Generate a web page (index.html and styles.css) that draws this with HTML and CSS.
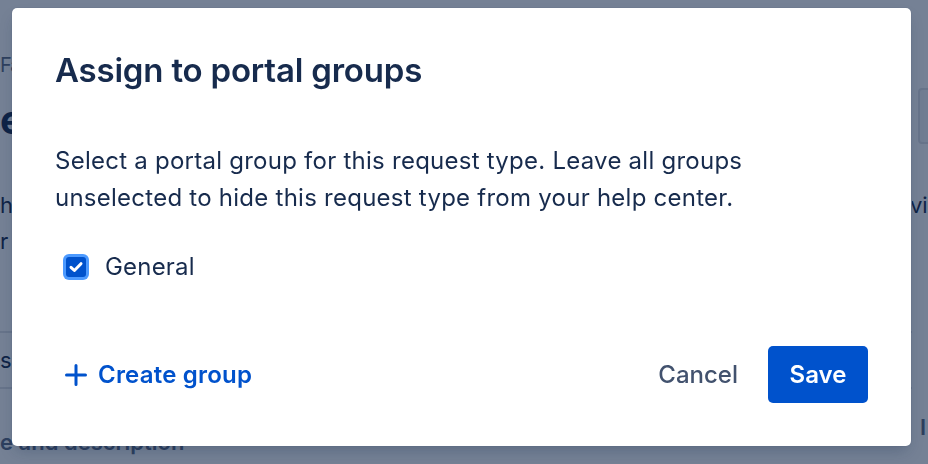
FILE: index.html
```html
<!DOCTYPE html>
<html lang="en">
<head>
<meta charset="utf-8">
<title>Assign to portal groups</title>
<link rel="stylesheet" href="styles.css">
</head>
<body>
<div class="page">
  <div class="page-main">
    <div class="crumb">Fa</div>
    <div class="heading">e</div>
    <div class="para">
      <p>h</p>
      <p>r</p>
    </div>
    <div class="table">
      <div class="row">s</div>
    </div>
    <div class="col-head">e and description</div>
  </div>
  <div class="page-side">
    <div class="side-box"></div>
    <div class="side-text">vig</div>
    <div class="side-col">I</div>
  </div>
</div>

<div class="blanket">
  <div class="modal" role="dialog" aria-labelledby="modal-title">
    <h1 class="modal-title" id="modal-title">Assign to portal groups</h1>
    <p class="modal-desc">Select a portal group for this request type. Leave all groups unselected to hide this request type from your help center.</p>
    <label class="check">
      <span class="check-box">
        <svg viewBox="0 0 20 20" width="20" height="20" aria-hidden="true"><path d="M5 10.3l3.4 3.2 6.6-6.8" fill="none" stroke="#fff" stroke-width="3" stroke-linecap="round" stroke-linejoin="round"/></svg>
      </span>
      <span class="check-label">General</span>
    </label>
    <div class="modal-footer">
      <a class="create-link" href="#">
        <svg class="plus" viewBox="0 0 22 22" width="22" height="22" aria-hidden="true"><path d="M11 1.5v19M1.5 11h19" stroke="#0052cc" stroke-width="3" stroke-linecap="round"/></svg>
        <span>Create group</span>
      </a>
      <div class="actions">
        <button class="btn btn-subtle" type="button">Cancel</button>
        <button class="btn btn-primary" type="button">Save</button>
      </div>
    </div>
  </div>
</div>
</body>
</html>
```

FILE: styles.css
```css
html, body {
  margin: 0;
  padding: 0;
}

body {
  width: 928px;
  height: 464px;
  overflow: hidden;
  background: #ffffff;
  font-family: Inter, "Noto Sans", "Liberation Sans", sans-serif;
  color: #172b4d;
}

/* background page */
.page {
  display: flex;
  height: 464px;
}

.page-main {
  flex: 1;
  padding-top: 52px;
}

.crumb {
  font-size: 20px;
  line-height: 26px;
  color: #5e6c84;
  letter-spacing: -1px;
}

.heading {
  margin-top: 20px;
  font-size: 40px;
  font-weight: 700;
  line-height: 44px;
}

.para {
  margin-top: 45px;
  font-size: 22px;
  line-height: 36px;
}

.para p {
  margin: 0;
}

.table {
  margin-top: 72px;
  border-top: 2px solid #dfe1e6;
  border-bottom: 2px solid #dfe1e6;
}

.row {
  height: 54px;
  line-height: 54px;
  font-size: 22px;
}

.col-head {
  margin-top: 40px;
  font-size: 22px;
  font-weight: 600;
  color: #5e6c84;
}

.page-side {
  width: 16px;
  padding-top: 88px;
  overflow: hidden;
}

.side-box {
  height: 52px;
  margin-left: 6px;
  width: 40px;
  border: 2px solid #dfe1e6;
  border-radius: 4px;
  background: #f4f5f7;
}

.side-text {
  margin-top: 48px;
  font-size: 22px;
  margin-left: -2px;
}

.side-col {
  margin-top: 196px;
  font-size: 22px;
  font-weight: 600;
  margin-left: 8px;
  color: #5e6c84;
}

/* blanket + modal */
.blanket {
  position: fixed;
  inset: 0;
  background: rgba(9, 30, 66, 0.56);
  padding: 8px 17px 0 12px;
}

.modal {
  background: #ffffff;
  border-radius: 5px;
  box-shadow: 0 0 1px rgba(9, 30, 66, 0.31), 0 8px 16px -4px rgba(9, 30, 66, 0.25);
  padding: 40px 43px 43px 43px;
  height: 438px;
  box-sizing: border-box;
  display: flex;
  flex-direction: column;
}

.modal-title {
  margin: 0;
  font-size: 33px;
  font-weight: 600;
  line-height: 44px;
  letter-spacing: -0.2px;
  color: #172b4d;
}

.modal-desc {
  margin: 50px 0 0 0;
  max-width: 710px;
  font-size: 24px;
  line-height: 37px;
  letter-spacing: 0.25px;
  color: #172b4d;
}

.check {
  display: flex;
  align-items: center;
  margin-top: 33px;
  gap: 19px;
  margin-left: 11px;
}

.check-box {
  width: 20px;
  height: 20px;
  border-radius: 3px;
  background: #0052cc;
  box-shadow: 0 0 0 3px #4c9aff;
  display: flex;
}

.check-label {
  font-size: 24px;
  line-height: 36px;
  letter-spacing: 0.2px;
  color: #172b4d;
}

.modal-footer {
  margin-top: auto;
  display: flex;
  align-items: center;
  justify-content: space-between;
}

.create-link {
  display: flex;
  align-items: center;
  gap: 11px;
  margin-left: 10px;
  color: #0052cc;
  text-decoration: none;
  font-size: 24px;
  font-weight: 600;
  letter-spacing: 0.2px;
}

.plus {
  display: block;
}

.actions {
  display: flex;
  align-items: center;
  gap: 10px;
}

.btn {
  font-family: inherit;
  font-size: 24px;
  font-weight: 600;
  border: none;
  border-radius: 5px;
  height: 57px;
  cursor: pointer;
}

.btn-subtle {
  background: transparent;
  color: #42526e;
  font-weight: 500;
  padding: 0 20px;
}

.btn-primary {
  background: #0052cc;
  color: #ffffff;
  width: 100px;
  padding: 0;
}
```
